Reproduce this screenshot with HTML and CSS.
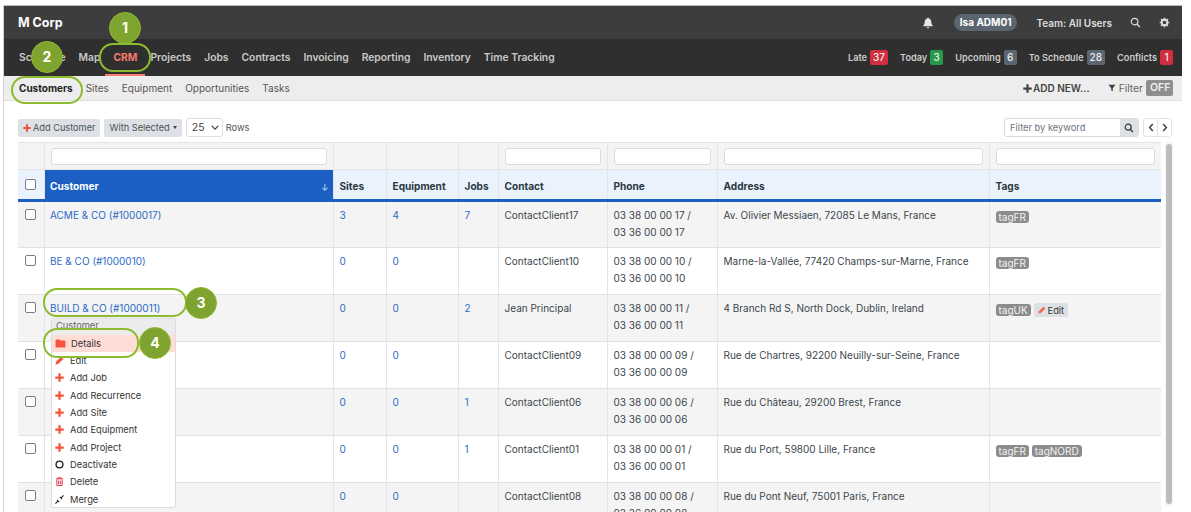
FILE: index.html
```html
<!DOCTYPE html>
<html lang="en">
<head>
<meta charset="utf-8">
<title>M Corp - Customers</title>
<link rel="stylesheet" href="styles.css">
</head>
<body>
<svg class="defs" aria-hidden="true">
  <defs>
    <symbol id="plus" viewBox="0 0 10 10"><path d="M5 .3v9.400M.3 5h9.400" fill="none" stroke="currentColor" stroke-width="2.500"/></symbol>
    <symbol id="pencil" viewBox="0 0 10 10"><path d="M.5 9.500l.6-3L6.800.8l2.400 2.400-5.700 5.700z" fill="currentColor"/></symbol>
  </defs>
</svg>
<div class="app">
  <header class="topbar">
    <div class="brand">M Corp</div>
    <div class="top-right">
      <svg class="bell" viewBox="0 0 12 12"><path d="M6 .6c.5 0 .8.3.8.8 1.700.4 2.500 1.700 2.500 3.400 0 2 .6 2.800 1.300 3.600v.8H1.400v-.8c.7-.8 1.300-1.600 1.300-3.600 0-1.700.8-3 2.500-3.400 0-.5.3-.8.8-.8zM4.700 10.300h2.600c0 .7-.6 1.200-1.300 1.200s-1.300-.5-1.300-1.200z" fill="currentColor"/></svg>
      <span class="user-pill">Isa ADM01</span>
      <span class="team">Team: All Users</span>
      <svg class="top-icon" viewBox="0 0 12 12"><circle cx="5" cy="5" r="3.600" fill="none" stroke="currentColor" stroke-width="1.300"/><path d="M7.800 7.800l3 3" stroke="currentColor" stroke-width="1.500"/></svg>
      <svg class="top-icon gear" viewBox="0 0 12 12"><circle cx="6" cy="6" r="3" fill="none" stroke="currentColor" stroke-width="2"/><path d="M6 .8v2M6 9.200v2M.8 6h2M9.200 6h2M2.300 2.300l1.400 1.400M8.300 8.300l1.400 1.400M2.300 9.700l1.400-1.400M8.300 3.700l1.400-1.400" stroke="currentColor" stroke-width="1.700"/></svg>
    </div>
  </header>
  <nav class="mainnav">
    <div class="nav-links">
      <a>Schedule</a><a>Map</a><a class="active">CRM</a><a>Projects</a><a>Jobs</a><a>Contracts</a><a>Invoicing</a><a>Reporting</a><a>Inventory</a><a>Time Tracking</a>
    </div>
    <div class="counters">
      <span class="counter">Late <b class="red wide">37</b></span>
      <span class="counter">Today <b class="green">3</b></span>
      <span class="counter">Upcoming <b class="slate">6</b></span>
      <span class="counter">To Schedule <b class="slate wide">28</b></span>
      <span class="counter">Conflicts <b class="red">1</b></span>
    </div>
  </nav>
  <nav class="subnav">
    <div class="sub-links"><a class="current">Customers</a><a>Sites</a><a>Equipment</a><a>Opportunities</a><a>Tasks</a></div>
    <div class="sub-right">
      <span class="add-new"><svg class="ico10"><use href="#plus"/></svg>ADD NEW...</span>
      <span class="filter"><svg class="funnel" viewBox="0 0 10 10"><path d="M.5 1h9L6 5.200V9L4 8V5.200z" fill="currentColor"/></svg>Filter</span>
      <span class="off">OFF</span>
    </div>
  </nav>
  <main class="content">
    <div class="toolbar">
      <button class="btn"><svg class="ico-plus"><use href="#plus"/></svg>Add Customer</button>
      <button class="btn">With Selected <i class="caret"></i></button>
      <span class="select">25<svg viewBox="0 0 10 6"><path d="M1 1l4 4 4-4" fill="none" stroke="currentColor" stroke-width="1.600"/></svg></span>
      <span class="rows-label">Rows</span>
      <div class="toolbar-right">
        <div class="search"><span class="search-text">Filter by keyword</span><span class="search-btn"><svg viewBox="0 0 12 12"><circle cx="5" cy="5" r="3.600" fill="none" stroke="currentColor" stroke-width="1.400"/><path d="M7.800 7.800l3 3" stroke="currentColor" stroke-width="1.600"/></svg></span></div>
        <div class="pager"><span><svg viewBox="0 0 6 10"><path d="M5 1L1.500 5 5 9" fill="none" stroke="currentColor" stroke-width="1.700"/></svg></span><span><svg viewBox="0 0 6 10"><path d="M1 1l3.500 4L1 9" fill="none" stroke="currentColor" stroke-width="1.700"/></svg></span></div>
      </div>
    </div>
    <div class="table-area">
      <table class="grid">
        <colgroup>
          <col class="c-check"><col class="c-cust"><col class="c-sites"><col class="c-equip"><col class="c-jobs"><col class="c-contact"><col class="c-phone"><col class="c-addr"><col class="c-tags">
        </colgroup>
        <thead>
          <tr class="filters">
            <th></th><th><span class="fbox"></span></th><th></th><th></th><th></th><th><span class="fbox"></span></th><th><span class="fbox"></span></th><th><span class="fbox"></span></th><th><span class="fbox"></span></th>
          </tr>
          <tr class="heads">
            <th><span class="check"></span></th><th class="sorted">Customer<span class="arrow">↓</span></th><th>Sites</th><th>Equipment</th><th>Jobs</th><th>Contact</th><th>Phone</th><th>Address</th><th>Tags</th>
          </tr>
        </thead>
        <tbody>
          <tr><td><span class="check"></span></td><td><a>ACME &amp; CO (#1000017)</a></td><td><a>3</a></td><td><a>4</a></td><td><a>7</a></td><td>ContactClient17</td><td>03 38 00 00 17 /<br>03 36 00 00 17</td><td>Av. Olivier Messiaen, 72085 Le Mans, France</td><td><span class="tag">tagFR</span></td></tr>
          <tr><td><span class="check"></span></td><td><a>BE &amp; CO (#1000010)</a></td><td><a>0</a></td><td><a>0</a></td><td></td><td>ContactClient10</td><td>03 38 00 00 10 /<br>03 36 00 00 10</td><td>Marne-la-Vallée, 77420 Champs-sur-Marne, France</td><td><span class="tag">tagFR</span></td></tr>
          <tr><td><span class="check"></span></td><td><a>BUILD &amp; CO (#1000011)</a></td><td><a>0</a></td><td><a>0</a></td><td><a>2</a></td><td>Jean Principal</td><td>03 38 00 00 11 /<br>03 36 00 00 11</td><td>4 Branch Rd S, North Dock, Dublin, Ireland</td><td><span class="tag">tagUK</span> <span class="tag-edit"><svg><use href="#pencil"/></svg>Edit</span></td></tr>
          <tr><td><span class="check"></span></td><td></td><td><a>0</a></td><td><a>0</a></td><td></td><td>ContactClient09</td><td>03 38 00 00 09 /<br>03 36 00 00 09</td><td>Rue de Chartres, 92200 Neuilly-sur-Seine, France</td><td></td></tr>
          <tr><td><span class="check"></span></td><td></td><td><a>0</a></td><td><a>0</a></td><td><a>1</a></td><td>ContactClient06</td><td>03 38 00 00 06 /<br>03 36 00 00 06</td><td>Rue du Château, 29200 Brest, France</td><td></td></tr>
          <tr><td><span class="check"></span></td><td></td><td><a>0</a></td><td><a>0</a></td><td><a>1</a></td><td>ContactClient01</td><td>03 38 00 00 01 /<br>03 36 00 00 01</td><td>Rue du Port, 59800 Lille, France</td><td><span class="tag">tagFR</span> <span class="tag">tagNORD</span></td></tr>
          <tr><td><span class="check"></span></td><td></td><td><a>0</a></td><td><a>0</a></td><td></td><td>ContactClient08</td><td>03 38 00 00 08 /<br>03 36 00 00 08</td><td>Rue du Pont Neuf, 75001 Paris, France</td><td></td></tr>
        </tbody>
      </table>
      <div class="scrollbar"><span class="thumb"></span></div>
    </div>
  </main>
  <div class="menu">
    <div class="menu-title">Customer</div>
    <div class="menu-item hot"><svg class="mi" viewBox="0 0 12 10"><path d="M.5 1.500C.5 1 1 .5 1.500 .5h3l1.200 1.300h4.800c.6 0 1 .4 1 1v5.700c0 .6-.4 1-1 1h-9c-.6 0-1-.4-1-1z" fill="currentColor"/></svg>Details</div>
    <div class="menu-item"><svg class="mi"><use href="#pencil"/></svg>Edit</div>
    <div class="menu-item"><svg class="mi"><use href="#plus"/></svg>Add Job</div>
    <div class="menu-item"><svg class="mi"><use href="#plus"/></svg>Add Recurrence</div>
    <div class="menu-item"><svg class="mi"><use href="#plus"/></svg>Add Site</div>
    <div class="menu-item"><svg class="mi"><use href="#plus"/></svg>Add Equipment</div>
    <div class="menu-item"><svg class="mi"><use href="#plus"/></svg>Add Project</div>
    <div class="menu-item"><svg class="mi dark" viewBox="0 0 10 10"><circle cx="5" cy="5" r="3.800" fill="none" stroke="currentColor" stroke-width="1.500"/></svg>Deactivate</div>
    <div class="menu-item"><svg class="mi pink" viewBox="0 0 10 10"><path d="M1 2h8M3.500 2V.8h3V2M2 2.800v6.700h6V2.800M4 4v4M6 4v4" fill="none" stroke="currentColor" stroke-width="1.100"/></svg>Delete</div>
    <div class="menu-item"><svg class="mi dark" viewBox="0 0 10 10"><path d="M.5 9.500l3-3M6.500 3.500l3-3" stroke="currentColor" stroke-width="1.200"/><path d="M2.300 4.700l3 3-1.500.3-1.800-1.800zM4.700 2.300l3 3 .3-1.500L6.200 2z" fill="currentColor"/></svg>Merge</div>
  </div>
  <span class="ring ring-crm"></span>
  <span class="ring ring-cust"></span>
  <span class="ring ring-build"></span>
  <span class="ring ring-details"></span>
  <span class="num num1">1</span>
  <span class="num num2">2</span>
  <span class="num num3">3</span>
  <span class="num num4">4</span>
</div>
</body>
</html>
```
FILE: styles.css
```css
* { box-sizing: border-box; }
html, body { margin: 0; height: 512px; overflow: hidden; background: #fff; }
body { font-family: Inter, "Liberation Sans", sans-serif; font-size: 10px; color: #2f3a40; }
.defs { position: absolute; width: 0; height: 0; }
.app { position: relative; margin: 5px 0 0 3px; width: 1179px; height: 507px; overflow: hidden; border-left: 1px solid #d8cfe2; }

.topbar { height: 34px; background: #3d3d3d; display: flex; align-items: center; justify-content: space-between; padding: 0 12px 0 14px; color: #eee; border-top: 1px solid #bbb; }
.brand { font-size: 12.500px; font-weight: 700; color: #fff; }
.top-right { display: flex; align-items: center; font-size: 10px; font-weight: 600; }
.bell { width: 12px; height: 12px; color: #e6e6e6; margin-right: 20px; }
.user-pill { background: #5b6670; color: #fff; border-radius: 9px; padding: 2px 6px; line-height: 13px; margin-right: 19px; font-weight: 700; }
.team { color: #ddd; margin-right: 18px; }
.top-icon { width: 11px; height: 11px; color: #ddd; margin-right: 18px; }
.top-icon.gear { margin-right: 0; }

.mainnav { height: 37px; background: #2f2f2f; display: flex; align-items: stretch; justify-content: space-between; padding: 0 9px 0 15px; color: #ccc; font-size: 10.300px; font-weight: 600; }
.nav-links { display: flex; align-items: center; gap: 13px; }
.nav-links a { line-height: 37px; color: #c9c9c9; height: 37px; }
.nav-links a.active { color: #f77b6e; font-weight: 700; padding: 0 8px; margin: 0 -8px; border-bottom: 2px solid #f77b6e; }
.counters { display: flex; align-items: center; gap: 12px; }
.counter { display: inline-flex; align-items: center; gap: 3px; font-size: 9.200px; }
.counter b { display: inline-block; height: 15px; line-height: 15px; min-width: 13px; padding: 0 3px; border-radius: 2px; color: #eee; font-size: 10px; font-weight: 500; text-align: center; }
.counter b.wide { min-width: 18px; }
.red { background: #d22f3e; }
.green { background: #27984a; }
.slate { background: #5b6670; }

.subnav { height: 25px; background: #ededed; border-bottom: 1px solid #ddd; display: flex; align-items: center; justify-content: space-between; padding: 0 9px 0 15px; color: #555; }
.sub-links { display: flex; gap: 13px; }
.sub-links a.current { color: #222; font-weight: 700; }
.sub-right { display: flex; align-items: center; color: #555; }
.add-new { display: inline-flex; align-items: center; gap: 1px; font-size: 10px; font-weight: 600; margin-right: 18px; color: #444; }
.ico10 { width: 9px; height: 9px; }
.funnel { width: 8px; height: 8px; margin-right: 3px; color: #444; }
.filter { display: inline-flex; align-items: center; margin-right: 3px; color: #666; font-size: 10.300px; }
.off { background: #8e8e8e; color: #eee; border-radius: 2px; padding: 0 4px; width: 27px; height: 16px; line-height: 16px; font-weight: 600; font-size: 10.500px; }

.content { padding: 17px 9px 0 14px; }
.toolbar { display: flex; align-items: center; height: 19px; }
.btn { border: 0; background: #dde1e5; border-radius: 2px; height: 18px; padding: 0 5px; font: inherit; font-size: 9.200px; color: #4a5258; margin-right: 4px; display: inline-flex; align-items: center; white-space: nowrap; }
.ico-plus { width: 8px; height: 8px; color: #f4543c; margin-right: 2px; }
.caret { display: inline-block; margin-left: 3px; border-top: 3px solid #444; border-left: 2.500px solid transparent; border-right: 2.500px solid transparent; }
.select { width: 37px; height: 19px; border: 1px solid #dcdfe2; border-radius: 3px; display: inline-flex; align-items: center; justify-content: space-between; padding: 0 3px 0 5px; color: #444; font-size: 10.500px; margin-right: 3px; }
.select svg { width: 8px; height: 5px; }
.rows-label { font-size: 9.300px; color: #555; }
.toolbar-right { margin-left: auto; display: flex; gap: 4px; padding-right: 1px; }
.search { display: flex; width: 135px; height: 19px; border: 1px solid #d8dbde; border-radius: 3px; overflow: hidden; }
.search-text { flex: 1; padding-left: 5px; line-height: 17px; color: #6d757b; font-size: 9.300px; }
.search-btn { width: 18px; background: #dde1e5; display: flex; align-items: center; justify-content: center; color: #333; }
.search-btn svg { width: 10px; height: 10px; }
.pager { display: flex; width: 29px; height: 19px; border: 1px solid #e2e4e6; border-radius: 3px; color: #444; }
.pager span { flex: 1; display: flex; align-items: center; justify-content: center; }
.pager span + span { border-left: 1px solid #e2e4e6; }
.pager svg { width: 6px; height: 9px; }

.table-area { display: flex; gap: 4px; margin-top: 5px; }
.grid { table-layout: fixed; width: 1143px; border-collapse: collapse; flex: none; }
.c-check { width: 26px; } .c-cust { width: 289px; } .c-sites { width: 53px; } .c-equip { width: 72px; } .c-jobs { width: 40px; } .c-contact { width: 109px; } .c-phone { width: 110px; } .c-addr { width: 272px; } .c-tags { width: 172px; }
.grid th, .grid td { border: 1px solid #e2e4e6; border-top: 0; padding: 0 6px; text-align: left; }
.grid th:first-child, .grid td:first-child { border-left: 0; padding: 0; }
.grid th:last-child, .grid td:last-child { border-right: 0; }
.filters th { height: 27px; background: #f4f4f4; border-top: 1px solid #e2e4e6; vertical-align: middle; }
.fbox { display: block; height: 17px; background: #fff; border: 1px solid #d8dbde; border-radius: 3px; }
.heads th { height: 31px; padding-top: 3px; background: #eaf2fd; border-bottom: 3px solid #1a5fc1; color: #2a3a40; font-size: 10.100px; font-weight: 700; vertical-align: middle; }
.heads th:first-child { padding-top: 0; }
.heads th.sorted { background: #1a5fc1; color: #fff; position: relative; padding-left: 5.500px; }
.arrow { position: absolute; right: 4px; top: 12px; font-size: 9px; color: #cfe0f7; font-weight: 400; }
.check { display: block; width: 11px; height: 11px; margin-left: 7px; border: 1px solid #7c7c7c; border-radius: 2px; background: #fff; }
.grid tbody td { height: 47px; vertical-align: top; padding-top: 5px; line-height: 17px; font-size: 10px; color: #3b464c; border-bottom: 1px solid #dfe1e3; }
.grid tbody td:first-child { padding-top: 7px; }
.grid tbody td:nth-child(2) { padding-left: 5.500px; }
.grid tbody tr:nth-child(odd) td { background: #f4f4f4; }
.grid a { color: #2a6bc4; }
.tag { display: inline-block; background: #8c8c8c; color: #f2f2f2; border-radius: 3px; padding: 0 3px; font-size: 10px; line-height: 12px; vertical-align: top; margin-top: 4px; }
.tag-edit { display: inline-flex; align-items: center; vertical-align: top; margin-top: 3px; background: #dde1e5; border-radius: 2px; padding: 0 4px; height: 14px; font-size: 9.300px; color: #333; }
.tag-edit svg { width: 8px; height: 8px; color: #f4654f; margin-right: 2px; }
.scrollbar { width: 8px; flex: none; padding: 2px 1px; background: #f6f6f6; height: 364px; }
.thumb { display: block; width: 6px; height: 360px; background: #bdbdbd; border-radius: 3px; }

.menu { position: absolute; left: 47px; top: 313px; width: 125px; height: 190px; background: #fff; border: 1px solid #dcdcdc; border-radius: 2px; color: #333; }
.menu-title { height: 15.500px; background: #ececec; color: #666; font-size: 9.300px; padding-left: 4px; line-height: 14px; }
.menu-item { height: 17.330px; display: flex; align-items: center; font-size: 9.300px; padding-left: 3px; white-space: nowrap; }
.menu-item.hot { background: #ffdcd6; }
.mi { width: 9px; height: 9px; margin-right: 6px; color: #f4543c; flex: none; }
.hot .mi { width: 11px; height: 9px; margin-right: 5px; }
.mi.dark { color: #222; }
.mi.pink { color: #e8324a; }

.ring { position: absolute; border: 2px solid #8dbb2e; border-radius: 14px; }
.ring-crm { left: 95px; top: 38px; width: 52px; height: 29px; }
.ring-cust { left: 7px; top: 71px; width: 72px; height: 28px; }
.ring-build { left: 39px; top: 283px; width: 144px; height: 29px; }
.ring-details { left: 39px; top: 323px; width: 96px; height: 30px; }
.num { position: absolute; width: 32px; height: 32px; border-radius: 50%; background: #7fa32f; border: 1px solid #8dbb2e; color: #fff; font-size: 14px; font-weight: 700; line-height: 30px; text-align: center; }
.num1 { left: 105px; top: 7px; }
.num2 { left: 27px; top: 36px; }
.num3 { left: 181px; top: 282px; }
.num4 { left: 135px; top: 322px; }
```
